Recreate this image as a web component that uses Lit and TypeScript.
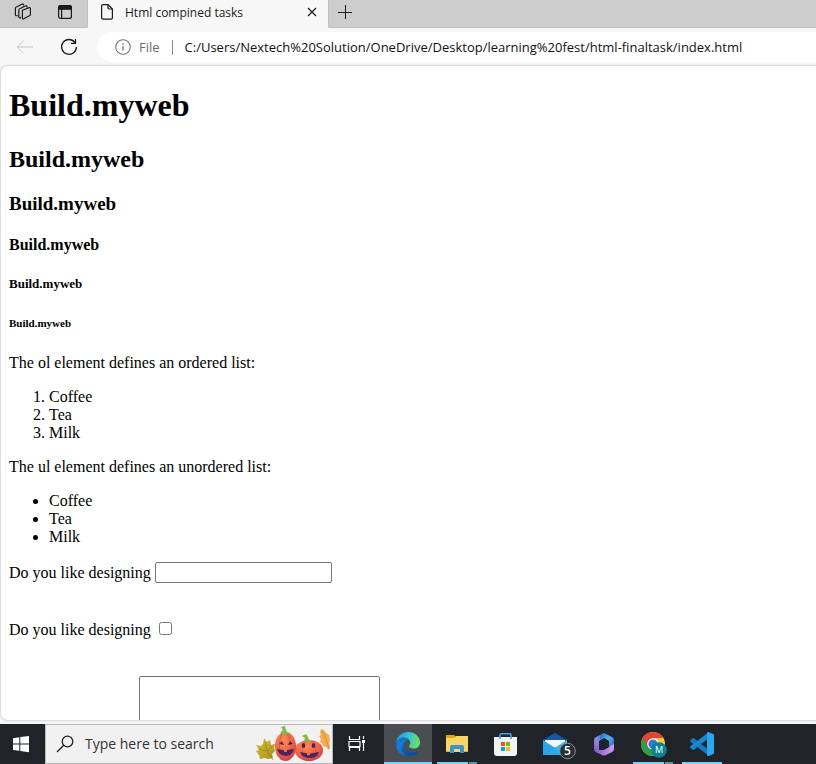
import { LitElement, html, css } from "lit";
import { customElement } from "lit/decorators.js";

const uiFont = css`"Open Sans", "Noto Sans", sans-serif`;

@customElement("browser-chrome")
class BrowserChrome extends LitElement {
  static styles = css`
    :host { display: block; font-family: ${uiFont}; color: #1b1b1b; background: #f7f7f7; }
    .tabs { display: flex; height: 28px; background: #cdcdcd; }
    .tools { display: flex; flex: none; width: 88px; box-sizing: border-box; padding-left: 10px; gap: 16px; border-bottom: 1px solid #bdbdbd; border-right: 1px solid #c0c0c0; border-radius: 0 0 5px 0; }
    button { border: 0; padding: 0; background: none; display: grid; place-items: center; color: inherit; font: inherit; }
    svg { display: block; fill: none; stroke: currentColor; }
    .tools button { width: 26px; height: 24px; }
    .tab { display: flex; flex: none; align-items: center; width: 240px; height: 24px; padding-bottom: 4px; background: #f7f7f7; font-size: 12px; }
    .tab .doc { margin: 0 11px 0 12px; }
    .tab .title { flex: 1; white-space: nowrap; }
    .tab .close { width: 32px; height: 24px; }
    .rest { flex: 1; border-bottom: 1px solid #bdbdbd; border-left: 1px solid #c0c0c0; border-radius: 0 0 0 5px; }
    .rest button { width: 32px; height: 24px; }
    .wrap { background: #f7f7f7; }
    .bar { display: flex; align-items: center; padding: 4px 0 3px; }
    .nav { width: 44px; height: 30px; }
    .back { margin-left: 3px; color: #c4c4c4; }
    .address { flex: 1; min-width: 0; display: flex; align-items: center; height: 30px; margin-left: 6px; padding-left: 18px; background: #fff; border-radius: 15px 0 0 15px; font-size: 13px; }
    .file { margin-left: 8px; padding-right: 12px; color: #6b6b6b; }
    .sep { width: 1px; height: 15px; background: #8a8a8a; }
    .address input { flex: 1; min-width: 0; border: 0; outline: 0; padding: 0 0 0 12px; font: inherit; color: #111; background: none; }
    .info { color: #747474; }
  `;
  render() {
    return html`
      <div class="wrap">
        <div class="tabs">
          <div class="tools">
            <button aria-label="Workspaces">
              <svg width="18" height="18" viewBox="0 0 18 18" stroke-width="1.2" stroke-linejoin="round" stroke-linecap="round">
                <path d="M8.5 7.2 15 4.6q1.4-.4 1.4 1v5.8q0 1-1 1.4l-5.600 3q-1.400.6-1.400-.8V8.200q0-.8.1-1Z" />
                <path d="M6.600 14.600q-1.800.8-1.800-.8V7.200q0-1 .9-1.400L11.200 3q1.600-.6 1.800.8" />
                <path d="M3.200 12.600q-1.800.6-1.800-1V5.400q0-1 .9-1.400L7.800 1.300q1.400-.6 1.800.7" />
              </svg>
            </button>
            <button aria-label="Tab actions">
              <svg width="16" height="16" viewBox="0 0 16 16" stroke-width="1.2">
                <rect x="1.6" y="1.6" width="12.8" height="12.8" rx="2" />
                <path d="M1.6 5.2V3.6q0-2 2-2h8.8q2 0 2 2v1.6Z" fill="currentColor" />
                <path d="M4.6 5v9.4" />
              </svg>
            </button>
          </div>
          <div class="tab">
            <svg class="doc" width="14" height="18" viewBox="0 0 14 18" stroke-width="1.2" stroke-linejoin="round">
              <path d="M1.6 3q0-1.4 1.4-1.4h5L12.4 6v8.8q0 1.4-1.4 1.4H3q-1.4 0-1.4-1.4Z" />
              <path d="M8 1.8v3q0 1.2 1.2 1.2h3" />
            </svg>
            <span class="title">Html compined tasks</span>
            <button class="close" aria-label="Close tab">
              <svg width="10" height="10" viewBox="0 0 10 10" stroke-width="1.2"><path d="m1 1 8 8M9 1 1 9" /></svg>
            </button>
          </div>
          <div class="rest">
            <button aria-label="New tab">
              <svg width="14" height="14" viewBox="0 0 14 14"><path d="M7.5 0v14M0 7.5h14" /></svg>
            </button>
          </div>
        </div>
        <div class="bar">
          <button class="nav back" aria-label="Back">
            <svg width="18" height="14" viewBox="0 0 18 14"><path d="M17 7H1.5M7.5.8 1.2 7l6.3 6.2" /></svg>
          </button>
          <button class="nav" aria-label="Refresh">
            <svg width="18" height="18" viewBox="0 0 18 18" stroke-width="1.3"><path d="M14.8 4.3A7.4 7.4 0 1 0 16.4 9M15.5 1v4.3h-4.6" /></svg>
          </button>
          <label class="address">
            <svg class="info" width="16" height="16" viewBox="0 0 16 16" stroke-width="1.1">
              <circle cx="8" cy="8" r="7.3" /><path d="M8 7v4.6M8 4.3v1.5" stroke-width="1.3" />
            </svg>
            <span class="file">File</span><span class="sep"></span>
            <input aria-label="Address" value="C:/Users/Nextech%20Solution/OneDrive/Desktop/learning%20fest/html-finaltask/index.html" />
          </label>
        </div>
      </div>
    `;
  }
}

@customElement("web-document")
class WebDocument extends LitElement {
  static styles = css`
    :host { display: block; font-family: "Liberation Serif", serif; font-size: 16px; line-height: 18px; color: #000; padding: 0 8px; }
    h1 { font-size: 32px; line-height: 37px; margin: 21px 0 22px; }
    h2 { font-size: 24px; line-height: 27px; margin: 20px 0; }
    h3 { font-size: 19px; line-height: 21px; margin: 20px 0 22px; }
    h4 { font-size: 16px; line-height: 18px; margin: 21px 0 22px; }
    h5 { font-size: 13px; line-height: 15px; margin: 22px 0 26px; }
    h6 { font-size: 11px; line-height: 13px; margin: 24px 0; }
    p, ol, ul { margin: 16px 0; }
    ol, ul { padding-left: 40px; }
    .row { display: flex; align-items: center; gap: 4px; height: 21px; margin-bottom: 36px; }
    .row input[type="text"] { box-sizing: border-box; width: 177px; height: 21px; border: 1px solid #767676; border-radius: 2px; padding: 1px 2px; }
    .row input[type="checkbox"] { width: 13px; height: 13px; margin: 0 4px 2px; }
    .message { padding-left: 130px; }
    textarea { display: block; box-sizing: border-box; width: 241px; height: 160px; border: 1px solid #767676; border-radius: 2px; resize: none; }
  `;
  render() {
    return html`
      <h1>Build.myweb</h1>
      <h2>Build.myweb</h2>
      <h3>Build.myweb</h3>
      <h4>Build.myweb</h4>
      <h5>Build.myweb</h5>
      <h6>Build.myweb</h6>
      <p>The ol element defines an ordered list:</p>
      <ol><li>Coffee</li><li>Tea</li><li>Milk</li></ol>
      <p>The ul element defines an unordered list:</p>
      <ul><li>Coffee</li><li>Tea</li><li>Milk</li></ul>
      <form>
        <div class="row"><label for="answer">Do you like designing</label><input id="answer" type="text" /></div>
        <div class="row"><label for="agree">Do you like designing</label><input id="agree" type="checkbox" /></div>
        <div class="message"><textarea aria-label="Message"></textarea></div>
      </form>
    `;
  }
}

@customElement("task-bar")
class TaskBar extends LitElement {
  static styles = css`
    :host { display: flex; height: 40px; background: #202327; font-family: ${uiFont}; overflow: hidden; }
    button { flex: none; border: 0; padding: 0; background: none; display: block; height: 40px; }
    svg { display: block; }
    .start { width: 45px; }
    .search { flex: none; display: flex; align-items: center; box-sizing: border-box; width: 288px; height: 40px; border: 1px solid #b9b9b9; background: #f1f1f1; padding-left: 10px; }
    .search input { flex: 1; min-width: 0; border: 0; outline: 0; padding: 0; margin-left: 11px; background: none; font: 14px/20px ${uiFont}; color: #333; }
    .search input::placeholder { color: #333; opacity: 1; }
    .view { width: 51px; }
    .apps { display: flex; gap: 1px; }
    .app { width: 48px; }
    .active { background: #4a4e52; }
    text { font-family: ${uiFont}; text-anchor: middle; fill: #fff; }
  `;
  render() {
    return html`
      <button class="start" aria-label="Start">
        <svg width="45" height="40" viewBox="0 0 45 40" fill="#fff">
          <path d="M13 14.2 19.3 13.3V19.5H13ZM20.3 13.1 29 11.9V19.5H20.3ZM13 20.5h6.3v6.3L13 25.9ZM20.3 20.5H29v7.7l-8.700-1.200Z" />
        </svg>
      </button>
      <label class="search">
        <svg width="18" height="18" viewBox="0 0 18 18" fill="none" stroke="#222" stroke-width="1.3"><circle cx="11.5" cy="6.5" r="5.3" /><path d="M7.7 10.3 1 17" /></svg>
        <input type="text" placeholder="Type here to search" aria-label="Search" />
        <svg width="78" height="38" viewBox="254 725 78 38">
          <defs>
            <radialGradient id="pk" cx=".4" cy=".3" r=".8"><stop offset="0" stop-color="#ff8a58" /><stop offset=".6" stop-color="#ef6040" /><stop offset="1" stop-color="#c2305a" /></radialGradient>
            <linearGradient id="lf" x2="1" y2="1"><stop stop-color="#d8bc34" /><stop offset="1" stop-color="#a8941c" /></linearGradient>
          </defs>
          <path d="m264 738 3 4 3-2 1 5 4-1-1 4 1 3-3 3 1 4-5 1-3-1-5 1-1-4-3-4 3-1-3-5 5 1 2-2Z" fill="url(#lf)" />
          <path d="m265 742 2 9 6 9m-6-9-8-2m8 2 5-4" fill="none" stroke="#93801a" stroke-width=".7" />
          <path d="m321 729 3 1 2 3 3 2 1 5-1 3 1 3-1 4-3-3-3-1-1-3-2-1 1-3-2-3 2-1-1-3Z" fill="#f6ac48" />
          <path d="m322 731 4 8 3 10" fill="none" stroke="#dc8535" stroke-width=".8" />
          <ellipse cx="309" cy="750.5" rx="14" ry="10.500" fill="url(#pk)" />
          <path d="M306 741q-7 9-1 19m7-19q7 9 1 19" fill="none" stroke="#d24a3c" stroke-width=".7" />
          <path d="m304 741 1-3-3-2 4-2 2 3q0 3 4 4-4 2-8 0Z" fill="#83b945" />
          <ellipse cx="285.500" cy="746.500" rx="10.500" ry="14.500" fill="url(#pk)" />
          <path d="M282 733q-5 13-1 27m6-27q7 13 2 27" fill="none" stroke="#d24a3c" stroke-width=".7" />
          <path d="m280 733 3-3-2-3 4-1 1 4q1 3 5 3-5 3-11 0Z" fill="#83b945" />
          <g fill="#46265f">
            <path d="m279 744 3-3 2 4Zm9 1 2-4 3 3Z" />
            <path d="m277 749 6 1 2 1 2-1 7-1q-2 7-8 7-7 0-9-7Z" />
            <path d="m300 752 5 1 4 1 4-1 6-1q-2 6-9 6-8 0-10-6Z" />
            <ellipse cx="303.500" cy="745.500" rx="1.800" ry="2.500" /><ellipse cx="313.500" cy="745.500" rx="1.800" ry="2.500" />
          </g>
          <path d="M284 750h3v2h-3Zm23 3.300h3v2h-3Z" fill="#f36b45" />
        </svg>
      </label>
      <button class="view" aria-label="Task view">
        <svg width="51" height="40" viewBox="0 0 51 40" fill="none" stroke="#fff" stroke-width="1.2">
          <path d="M16.5 12v3.500h10V12M16.500 27v-3.500h10V27M16 17.500h11v5H16ZM30.500 12v3M30.500 19v8" /><path d="M29 16h3v3h-3Z" fill="#fff" stroke="none" />
        </svg>
      </button>
      <div class="apps">
        <button class="app active" aria-label="Edge">
          <svg width="48" height="40" viewBox="0 0 48 40">
            <defs>
              <linearGradient id="e1" x1="0" y1=".3" x2="1" y2=".5"><stop stop-color="#2599e5" /><stop offset=".5" stop-color="#30c5d7" /><stop offset="1" stop-color="#6ce35b" /></linearGradient>
              <linearGradient id="e2" x2=".5" y2="1"><stop stop-color="#1582d5" /><stop offset="1" stop-color="#0c4d9f" /></linearGradient>
            </defs>
            <path d="M12 19C13 12 18 8 24 8c7 0 12 5 12 10.500 0 4-3 6-6.500 6-3 0-4.500-1.300-4.500-2.200 0-.7 1.300-1.300 1.300-3.300 0-3-3-5.500-6.800-5.500-3.500 0-6 2-7.500 5.500Z" fill="url(#e1)" />
            <path d="M12 20.500C12 16 15.500 13.500 19.500 13.500c2.500 0 4.700 1 5.900 2.600-3-.6-5.400 1.800-5.400 4.900 0 4.500 3.500 7.500 8 7.500 2.500 0 4.600-.8 6-1.500.6-.3 1 .2.6.7A12 12 0 0 1 24 32c-7 0-12-5-12-11.500Z" fill="url(#e2)" />
            <path d="M22.500 17q-5 2-5 7 0 5 5 8-9-1-10.300-9Q15 16 22.500 17Z" fill="#1b8bdd" opacity=".55" />
            <path d="M0 38h48v2H0Z" fill="#76d3f7" />
          </svg>
        </button>
        <button class="app" aria-label="File Explorer">
          <svg width="48" height="40" viewBox="0 0 48 40">
            <path d="M13 11h8l2 2h12v15H13Z" fill="#e6a50c" /><path d="M13 14h8l2-2h12v16H13Z" fill="#fcd462" />
            <path d="M17 29v-6q0-2 2-2h10q2 0 2 2v6h-4v-4h-6v4Z" fill="#3b91d8" /><path d="M13 27h4v1h-4Zm18 0h4v1h-4Z" fill="#e6ae38" />
            <path d="M4 38h31v2H4Z" fill="#76d3f7" /><path d="M36 38h8v2h-8Z" fill="#5795aa" />
          </svg>
        </button>
        <button class="app" aria-label="Store">
          <svg width="48" height="40" viewBox="0 0 48 40">
            <path d="M12 13h23v16q0 3-3 3H15q-3 0-3-3Z" fill="#f3f3f3" />
            <path d="M18 15v-4q0-1.200 1.200-1.200h8.600q1.200 0 1.200 1.200v4" fill="none" stroke="#31a9e8" stroke-width="1.600" />
            <path d="M19 18h4v4h-4Z" fill="#f25022" /><path d="M24 18h4v4h-4Z" fill="#7fba00" /><path d="M19 23h4v4h-4Z" fill="#00a4ef" /><path d="M24 23h4v4h-4Z" fill="#ffb900" />
          </svg>
        </button>
        <button class="app" aria-label="Mail, 5 unread">
          <svg width="48" height="40" viewBox="0 0 48 40">
            <path d="M12 16 24 9l12 7v8H12Z" fill="#1459a6" /><path d="M14 16h20v5l-10 6-10-6Z" fill="#f4f8fc" />
            <path d="m12 16 12 8 12-8v15H12Z" fill="#2aa5ea" /><path d="m12 31 12-8 5 8Z" fill="#1683d4" /><path d="m36 16-24 15h24Z" fill="#43c1f5" opacity=".6" />
            <circle cx="36.500" cy="27" r="7.800" fill="#2b2f33" stroke="#8a8d90" /><text x="36.500" y="31" font-size="12" font-weight="600">5</text>
          </svg>
        </button>
        <button class="app" aria-label="Microsoft 365">
          <svg width="48" height="40" viewBox="0 0 48 40">
            <defs>
              <linearGradient id="m1" x1=".6" x2=".2" y2="1"><stop stop-color="#3d7fd6" /><stop offset=".4" stop-color="#8f86e0" /><stop offset="1" stop-color="#7a58c8" /></linearGradient>
              <linearGradient id="m2" x2="1" y2=".6"><stop stop-color="#2c5fc4" /><stop offset=".6" stop-color="#4fb4ea" /><stop offset="1" stop-color="#3b74cf" /></linearGradient>
              <linearGradient id="m3"><stop stop-color="#7656cc" /><stop offset="1" stop-color="#d49cf2" /></linearGradient>
            </defs>
            <path d="m24 9-8 4q-2 1-2 3v9q0 2 2 3l4 2q-1-1-1-3V17l7-4Z" fill="url(#m1)" />
            <path d="M22 10q2-1.500 4 0l6 3q2 1 2 3v9l-5-2v-6l-5-3-4 2q-1-4 2-6Z" fill="url(#m2)" />
            <path d="m14 25 5 1 5 0 10-6v5q0 2-2 3l-6 3q-2 1-4 0l-6-3q-2-1-2-3Z" fill="url(#m3)" />
            <path d="m24 14.500 5 2.800v5.400L24 25.500l-5-2.800v-5.400Z" fill="#202327" />
          </svg>
        </button>
        <button class="app" aria-label="Chrome">
          <svg width="48" height="40" viewBox="0 0 48 40">
            <circle cx="24" cy="20" r="12" fill="#fbc934" />
            <path d="M24 20 13.600 14A12 12 0 0 0 24 32l5-9Z" fill="#2d9c4b" />
            <path d="M13.600 14A12 12 0 0 1 34.400 14H24l-5 9Z" fill="#e24335" />
            <circle cx="24" cy="20" r="5.800" fill="#fff" /><circle cx="24" cy="20" r="4.600" fill="#3575df" />
            <circle cx="30" cy="26" r="7.800" fill="#0c8390" /><text x="30" y="29" font-size="9">M</text>
            <path d="M4 38h31v2H4Z" fill="#76d3f7" /><path d="M36 38h8v2h-8Z" fill="#5795aa" />
          </svg>
        </button>
        <button class="app" aria-label="Visual Studio Code">
          <svg width="48" height="40" viewBox="0 0 48 40">
            <path d="m12.500 16 2-1.700q.7-.5 1.400 0L31 26v6L12.500 18q-.9-1 0-2Z" fill="#1678bd" />
            <path d="m12.500 24 2 1.700q.7.5 1.400 0L31 14V8L12.500 22q-.9 1 0 2Z" fill="#1489d2" />
            <path d="M31 8.200 36 10.500v19L31 32q-1 .2-2-.6V8.600Q30 7.900 31 8.200Z" fill="#2ba7f0" />
            <path d="M4 38h40v2H4Z" fill="#76d3f7" />
          </svg>
        </button>
      </div>
    `;
  }
}

@customElement("app-root")
class AppRoot extends LitElement {
  static styles = css`
    :host { display: flex; flex-direction: column; height: 100vh; background: #f7f7f7; overflow: hidden; }
    browser-chrome, task-bar { flex: none; }
    .page { flex: 1; min-height: 0; box-sizing: border-box; display: flow-root; overflow: hidden; margin-bottom: 3px; background: #fff; border: 1px solid #dedede; border-right: 0; border-radius: 8px 0 0 8px; box-shadow: 0 0 2px #d8d8d8; }
  `;
  render() {
    return html`
      <browser-chrome></browser-chrome>
      <main class="page"><web-document></web-document></main>
      <task-bar></task-bar>
    `;
  }
}
